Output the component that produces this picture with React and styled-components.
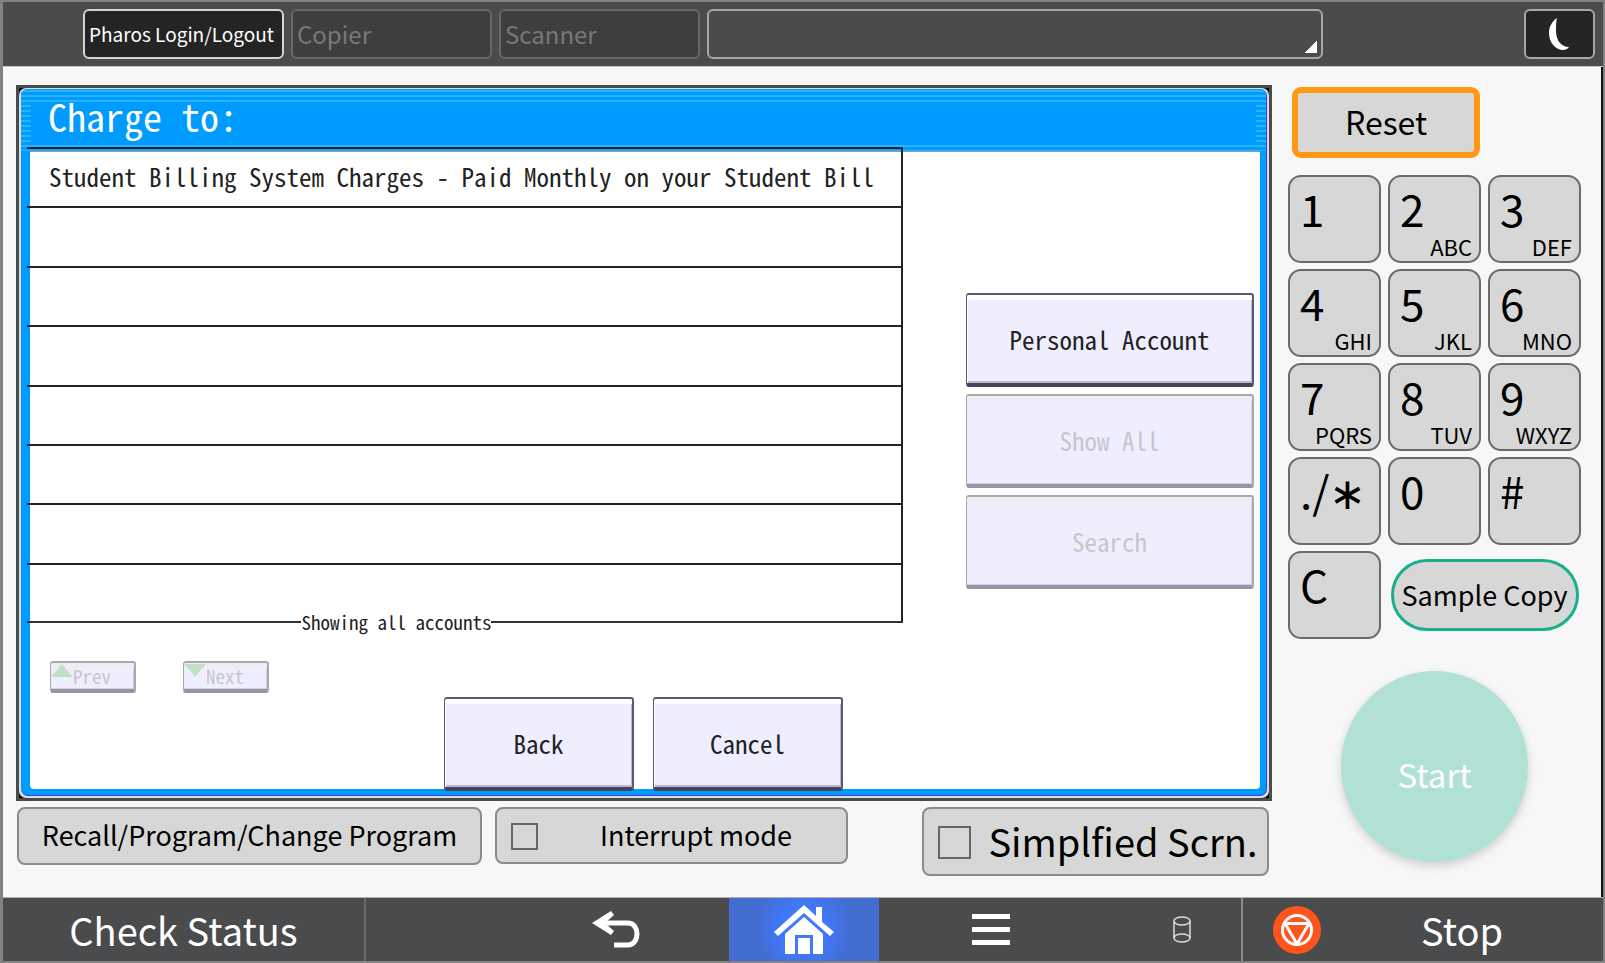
import React from "react";
import styled, { createGlobalStyle, css } from "styled-components";

const GlobalStyle = createGlobalStyle`
  *, *::before, *::after { box-sizing: border-box; }
  body {
    margin: 0;
    background: #f7f7f7;
    font-family: "Noto Sans CJK JP", "Noto Sans", sans-serif;
  }
  button, select { font: inherit; margin: 0; }
`

const mono = css`
  font-family: "Noto Sans Mono CJK JP", "Liberation Mono", monospace;
`

const Screen = styled.div`
  display: flex;
  flex-direction: column;
  min-height: 100vh;
  border: solid #808284;
  border-width: 2px 2px 2px 3px;
  background: #f7f7f7;
`

const TopBar = styled.header`
  display: flex;
  gap: 7px;
  padding: 7px 8px 7px 80px;
  background: #4a4b4d;
  border-bottom: 1px solid #c8c8c8;
`

const AppTab = styled.button`
  width: 201px;
  height: 50px;
  padding: 0 4px 2px;
  border: 2px solid ${({ $active }) => ($active ? "#d4d4d4" : "#66676a")};
  border-radius: 6px;
  background: ${({ $active }) => ($active ? "#242424" : "#3e3e3e")};
  color: ${({ $active }) => ($active ? "#fff" : "#77787a")};
  font-size: ${({ $active }) => ($active ? 19 : 24)}px;
  text-align: left;
  white-space: nowrap;
`

const JobSelect = styled.select`
  flex: 1;
  appearance: none;
  height: 50px;
  margin-right: 194px;
  border: 2px solid #a6a7a9;
  border-radius: 6px;
  background: linear-gradient(135deg, transparent 50%, #fff 50%) no-repeat right 4px bottom 4px / 12px 12px #4a4b4d;
  color: #fff;
`

const SleepButton = styled.button`
  display: flex;
  align-items: center;
  justify-content: center;
  width: 71px;
  height: 50px;
  padding: 0 2px 0 0;
  border: 2px solid #a6a7a9;
  border-radius: 6px;
  background: #242424;
`

const Main = styled.main`
  display: flex;
  flex: 1;
  gap: 16px;
  padding: 18px 20px 20px 13px;
  border-right: 2px solid #111;
`

const Left = styled.div`
  display: flex;
  flex: 1;
  flex-direction: column;
`

const Bezel = styled.section`
  display: flex;
  flex: 1;
  border: 3px solid #4a4b4b;
  background: #000;
`

const Bevel = styled.div`
  display: flex;
  flex: 1;
  padding: 1px 2px 2px 2px;
  border-radius: 7px;
  background: #dcdce4;
`

const Dialog = styled.div`
  display: flex;
  flex: 1;
  flex-direction: column;
  border: solid #3b3ff0;
  border-width: 0 1px 1px 0;
  border-radius: 7px;
  background: #009bff;
`

const TitleBar = styled.div`
  height: 62px;
  padding: 0 27px;
  border-radius: 6px 6px 0 0;
  background:
    linear-gradient(#009bff, #009bff) no-repeat 10px 13px / calc(100% - 20px) 41px,
    repeating-linear-gradient(#009bff 0 1px, #26b6ff 1px 3px, #009bff 3px 5px);
`

const Title = styled.h1`
  ${mono}
  margin: 0;
  color: #fff;
  font-size: 38px;
  font-weight: 400;
  line-height: 54px;
`

const Body = styled.div`
  display: flex;
  flex: 1;
  flex-direction: column;
  margin: 0 6px 6px 9px;
  border-top: 1px solid #8b9aa8;
  border-radius: 0 0 4px 4px;
  background: #fff;
`

const Upper = styled.div`
  display: flex;
  flex: 1;
`

const AccountPane = styled.div`
  display: flex;
  flex: 1;
  flex-direction: column;
  margin: -5px 0 0 -3px;
`

const AccountList = styled.ul`
  display: grid;
  flex: 1;
  grid-auto-rows: 1fr;
  margin: 0;
  padding: 0;
  border-right: 2px solid #222;
  list-style: none;
`

const AccountRow = styled.li`
  display: flex;
  border-top: 2px solid #222;
`

const AccountButton = styled.button`
  ${mono}
  flex: 1;
  padding: 0 22px 4px;
  border: 0;
  background: none;
  color: #222;
  font-size: 25px;
  text-align: left;
  white-space: nowrap;
`

const ListStatus = styled.div`
  ${mono}
  display: flex;
  align-items: center;
  height: 24px;
  margin-top: -12px;
  color: #222;
  font-size: 19px;
  line-height: 24px;

  &::before, &::after {
    content: "";
    flex: 2;
    height: 2px;
    background: #333;
  }

  &::after { flex: 3; }
`

const Actions = styled.div`
  display: flex;
  flex-direction: column;
  gap: 7px;
  width: 357px;
  padding: 141px 6px 0 63px;
`

const PanelButton = styled.button`
  ${mono}
  width: ${({ $width }) => $width || "auto"};
  height: 94px;
  padding: 0;
  border: solid #5c5a72;
  border-width: 2px 2px 4px 1px;
  border-bottom-color: #454360;
  border-radius: 3px;
  background: #efeeff;
  box-shadow: inset 1px 5px #fff, inset -1px -2px #b9b8c8;
  color: #222;
  font-size: 25px;

  &:disabled {
    border-color: #a9a9b2;
    border-bottom-color: #9795a3;
    box-shadow: inset 0 5px #eee, inset -1px -1px #cfcfe2;
    color: #c6c6cb;
  }
`

const Pager = styled.div`
  display: flex;
  gap: 47px;
  padding: 27px 0 0 20px;
`

const PageButton = styled(PanelButton)`
  display: flex;
  width: 86px;
  height: 32px;
  font-size: 19px;
  line-height: 26px;
`

const PageArrow = styled.svg`
  width: 22px;
  height: 13px;
  margin-top: 1px;
  fill: #c3dfc6;
`

const DialogButtons = styled.div`
  display: flex;
  gap: 19px;
  margin: 4px 0 -2px;
  padding-left: 414px;
`

const ModeRow = styled.div`
  display: flex;
  align-items: flex-start;
  gap: 13px;
  height: 76px;
  padding: 6px 3px 0 1px;
`

const greyKey = css`
  border: 2px solid #8b8b8b;
  border-radius: 8px;
  background: #d7d7d7;
  color: #000;
`

const ProgramButton = styled.button`
  ${greyKey}
  width: 465px;
  height: 58px;
  padding: 0 0 3px;
  font-size: 27px;
`

const ModeToggle = styled.label`
  ${greyKey}
  display: flex;
  align-items: center;
  width: ${({ $large }) => ($large ? 347 : 353)}px;
  height: ${({ $large }) => ($large ? 69 : 57)}px;
  margin-left: ${({ $large }) => ($large ? "auto" : 0)};
  padding: 0 0 0 14px;
  font-size: ${({ $large }) => ($large ? 38 : 27)}px;
  line-height: 48px;
  white-space: nowrap;

  input {
    appearance: none;
    width: ${({ $large }) => ($large ? 33 : 27)}px;
    height: ${({ $large }) => ($large ? 33 : 27)}px;
    margin: 2px 0 0;
    border: 2px solid #666;
  }

  span {
    flex: 1;
    padding: 0 0 2px 8px;
    text-align: center;
  }
`

const Keys = styled.aside`
  display: flex;
  flex-direction: column;
  align-items: center;
  width: 293px;
`

const ResetButton = styled.button`
  align-self: flex-start;
  width: 188px;
  height: 71px;
  margin: 2px 4px 17px;
  padding: 0 0 4px;
  border: 6px solid #ff9813;
  border-radius: 9px;
  background: #d7d7d7;
  color: #000;
  font-size: 32px;
`

const Keypad = styled.div`
  display: grid;
  grid-template-columns: repeat(3, 1fr);
  gap: 6px 7px;
  width: 100%;
`

const Key = styled.button`
  ${greyKey}
  display: flex;
  flex-direction: column;
  align-items: flex-start;
  height: 88px;
  padding: 2px 7px 0 10px;
  border: 2px solid #6b6b6b;
  border-radius: 13px;
`

const KeyLabel = styled.span`
  font-size: 44px;
  line-height: 58px;
`

const KeyLetters = styled.span`
  align-self: flex-end;
  font-size: 22px;
  line-height: 18px;
`

const SampleButton = styled.button`
  grid-column: span 2;
  place-self: center;
  width: 188px;
  height: 72px;
  padding: 0 0 2px;
  border: 3px solid #17b08b;
  border-radius: 36px;
  background: #d7d7d7;
  color: #000;
  font-size: 27px;
`

const StartButton = styled.button`
  width: 187px;
  height: 191px;
  margin-top: 32px;
  padding: 14px 0 0;
  border: 0;
  border-radius: 50%;
  background: #b1e1d5;
  box-shadow: 0 4px 10px rgba(0, 0, 0, 0.16);
  color: #fff;
  font-size: 33px;
`

const BottomBar = styled.footer`
  display: grid;
  grid-template-columns: 363px 1fr 226px 150px 224px 138px 362px;
  height: 64px;
  border-top: 1px solid #b0b0b0;
  background: #4a4b4d;
`

const BarButton = styled.button`
  display: flex;
  align-items: center;
  justify-content: center;
  padding: 0;
  border: 0;
  background: ${({ $home }) => ($home ? "radial-gradient(circle at 50% 50%, #4079ff 20px, #446dd2 48px)" : "none")};
  color: #fff;
  font-size: 38px;
`

const StatusButton = styled(BarButton)`
  border-right: 2px solid #68696b;
`

const BackButton = styled(BarButton)`
  grid-column: 3;
`

const StorageButton = styled(BarButton)`
  padding-left: 20px;
`

const StopButton = styled(BarButton)`
  justify-content: flex-start;
  padding-left: 30px;
  border-left: 2px solid #8b8b8b;

  span { flex: 1; text-align: center; }
`

const Moon = () => (
  <svg width="22" height="36" viewBox="0 0 22 36" fill="#fff" aria-hidden="true">
    <path d="M9 2C3 6 1 12 1 17c0 10 7 17 14 17 2 0 5-1 6-3C13 31 8 24 8 15 8 10 8 6 9 2z" />
  </svg>
)

const BackIcon = () => (
  <svg width="48" height="38" viewBox="0 0 48 38" fill="none" aria-hidden="true">
    <path d="M10 12h26c12 0 12 22 0 22H22" stroke="#fff" strokeWidth="5" />
    <path d="M0 12L19 0l3 4-9 8 9 8-3 4z" fill="#fff" />
  </svg>
)

const HomeIcon = () => (
  <svg width="60" height="50" viewBox="0 0 60 50" fill="#fff" aria-hidden="true">
    <path d="M30 0l12 11V2h6v15l12 10-4 4L30 8 4 31l-4-4z" />
    <path d="M30 12l19 17v20H39V30H21v19H11V29z" />
    <path d="M24 33h12v16H24z" />
  </svg>
)

const MenuIcon = () => (
  <svg width="38" height="32" viewBox="0 0 38 32" fill="#fff" aria-hidden="true">
    <path d="M0 0h38v5H0zM0 13h38v5H0zM0 26h38v5H0z" />
  </svg>
)

const StorageIcon = () => (
  <svg width="18" height="27" viewBox="0 0 18 27" fill="none" stroke="#ddd" strokeWidth="1.5" aria-hidden="true">
    <path d="M1 5v17M17 5v17" />
    <ellipse cx="9" cy="5" rx="8" ry="4" />
    <ellipse cx="9" cy="22" rx="8" ry="4" />
  </svg>
)

const StopIcon = () => (
  <svg width="48" height="48" viewBox="0 0 48 48" fill="none" aria-hidden="true">
    <circle cx="24" cy="24" r="24" fill="#ff541c" />
    <circle cx="24" cy="24" r="14.5" stroke="#fff" strokeWidth="3" />
    <path d="M12 17.5h24L24 38z" stroke="#fff" strokeWidth="3" strokeLinejoin="round" />
  </svg>
)

const accounts = ["Student Billing System Charges - Paid Monthly on your Student Bill"]
const ROWS = 8

const keys = [
  { label: "1" },
  { label: "2", letters: "ABC" },
  { label: "3", letters: "DEF" },
  { label: "4", letters: "GHI" },
  { label: "5", letters: "JKL" },
  { label: "6", letters: "MNO" },
  { label: "7", letters: "PQRS" },
  { label: "8", letters: "TUV" },
  { label: "9", letters: "WXYZ" },
  { label: "./∗" },
  { label: "0" },
  { label: "#" },
  { label: "C" },
]

const Accounts = () => (
  <AccountPane>
    <AccountList>
      {Array.from({ length: ROWS }, (_, index) => (
        <AccountRow key={index}>
          {accounts[index] && <AccountButton>{accounts[index]}</AccountButton>}
        </AccountRow>
      ))}
    </AccountList>
    <ListStatus>Showing all accounts</ListStatus>
  </AccountPane>
)

const ChargeDialog = () => (
  <Bezel>
    <Bevel>
      <Dialog>
        <TitleBar>
          <Title>Charge to:</Title>
        </TitleBar>
        <Body>
          <Upper>
            <Accounts />
            <Actions>
              <PanelButton>Personal Account</PanelButton>
              <PanelButton disabled>Show All</PanelButton>
              <PanelButton disabled>Search</PanelButton>
            </Actions>
          </Upper>
          <Pager>
            <PageButton disabled>
              <PageArrow viewBox="0 0 22 13"><path d="M11 0l11 13H0z" /></PageArrow>
              Prev
            </PageButton>
            <PageButton disabled>
              <PageArrow viewBox="0 0 22 13"><path d="M0 0h22L11 13z" /></PageArrow>
              Next
            </PageButton>
          </Pager>
          <DialogButtons>
            <PanelButton $width="190px">Back</PanelButton>
            <PanelButton $width="190px">Cancel</PanelButton>
          </DialogButtons>
        </Body>
      </Dialog>
    </Bevel>
  </Bezel>
)

const App = () => (
  <Screen>
    <GlobalStyle />
    <TopBar>
      <AppTab $active>Pharos Login/Logout</AppTab>
      <AppTab>Copier</AppTab>
      <AppTab>Scanner</AppTab>
      <JobSelect aria-label="Job">
        <option></option>
      </JobSelect>
      <SleepButton aria-label="Sleep"><Moon /></SleepButton>
    </TopBar>
    <Main>
      <Left>
        <ChargeDialog />
        <ModeRow>
          <ProgramButton>Recall/Program/Change Program</ProgramButton>
          <ModeToggle>
            <input type="checkbox" />
            <span>Interrupt mode</span>
          </ModeToggle>
          <ModeToggle $large>
            <input type="checkbox" />
            <span>Simplfied Scrn.</span>
          </ModeToggle>
        </ModeRow>
      </Left>
      <Keys>
        <ResetButton>Reset</ResetButton>
        <Keypad>
          {keys.map(key => (
            <Key key={key.label}>
              <KeyLabel>{key.label}</KeyLabel>
              {key.letters && <KeyLetters>{key.letters}</KeyLetters>}
            </Key>
          ))}
          <SampleButton>Sample Copy</SampleButton>
        </Keypad>
        <StartButton>Start</StartButton>
      </Keys>
    </Main>
    <BottomBar>
      <StatusButton>Check Status</StatusButton>
      <BackButton aria-label="Back"><BackIcon /></BackButton>
      <BarButton $home aria-label="Home"><HomeIcon /></BarButton>
      <BarButton aria-label="Menu"><MenuIcon /></BarButton>
      <StorageButton aria-label="Storage"><StorageIcon /></StorageButton>
      <StopButton>
        <StopIcon />
        <span>Stop</span>
      </StopButton>
    </BottomBar>
  </Screen>
)

export default App;
